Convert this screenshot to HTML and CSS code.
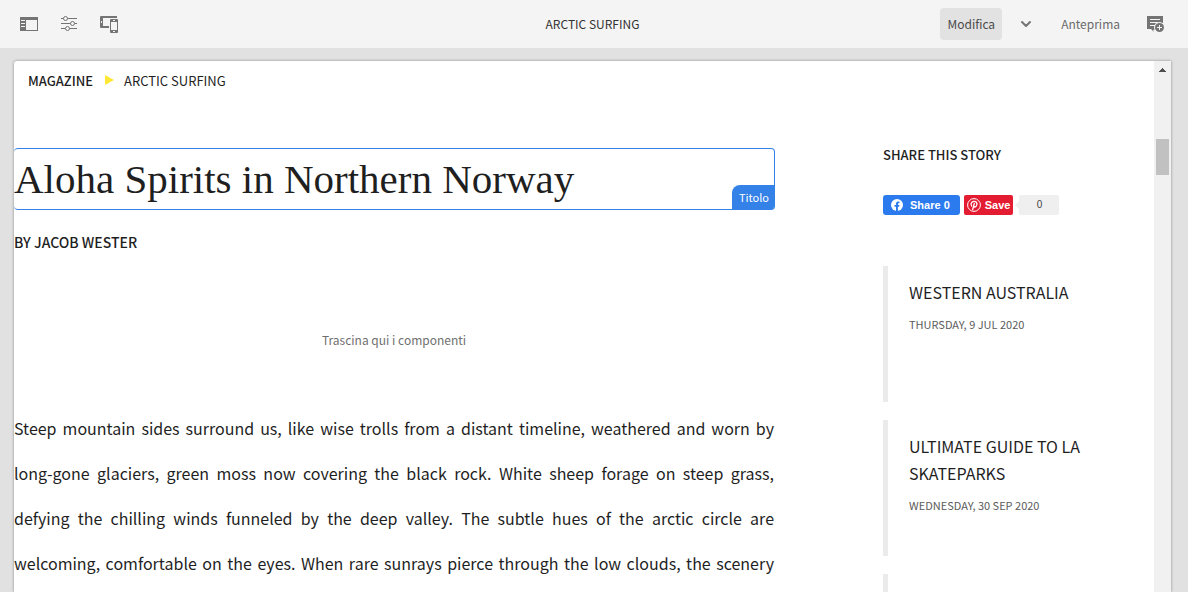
FILE: index.html
```html
<!DOCTYPE html>
<html lang="it">
<head>
<meta charset="utf-8">
<meta name="viewport" content="width=device-width, initial-scale=1">
<title>Arctic Surfing</title>
<link rel="stylesheet" href="styles.css">
</head>
<body>
<header class="toolbar">
  <div class="tools">
    <button class="tool" type="button" aria-label="Pannello laterale">
      <svg width="18" height="18" viewBox="0 0 18 18"><path fill="#747474" fill-rule="evenodd" d="M0 2h18v14H0zM6 5v10h11V5zM1 5h4v1H1zM1 8h4v1H1zM1 11h4v1H1z"/></svg>
    </button>
    <button class="tool" type="button" aria-label="Informazioni pagina">
      <svg width="18" height="18" viewBox="0 0 18 18" fill="none" stroke="#747474"><path d="M1 3.500h2.500M7.500 3.500H17M1 8.500h9.500M14.500 8.500H17M1 13.500h4.500M9.500 13.500H17"/><circle cx="5.500" cy="3.500" r="2"/><circle cx="12.500" cy="8.500" r="2"/><circle cx="7.500" cy="13.500" r="2"/></svg>
    </button>
    <button class="tool" type="button" aria-label="Emulatore">
      <svg width="18" height="18" viewBox="0 0 18 18" fill="#747474"><path fill-rule="evenodd" d="M1 1h16v2H3v8h6v2H1Q0 13 0 12V2Q0 1 1 1zM1 6v2h1V6z"/><path fill-rule="evenodd" d="M11 4h6q1 0 1 1v12q0 1-1 1h-6q-1 0-1-1V5q0-1 1-1zM11 7v8h6V7zM13 5v1h2V5zM13 16v1h2v-1z"/></svg>
    </button>
  </div>
  <h1 class="page-name">ARCTIC SURFING</h1>
  <div class="actions">
    <button class="mode mode-active" type="button">Modifica</button>
    <button class="chevron" type="button" aria-label="Modalità">
      <svg width="12" height="8" viewBox="0 0 12 8"><path fill="none" stroke="#747474" stroke-width="2" stroke-linecap="round" stroke-linejoin="round" d="M2 2l4 4 4-4"/></svg>
    </button>
    <button class="mode" type="button">Anteprima</button>
    <button class="tool" type="button" aria-label="Aggiungi annotazione">
      <svg width="18" height="18" viewBox="0 0 18 18"><path fill="#747474" d="M0 1h16v14H6l1 2L4 14H0z"/><path stroke="#f4f4f4" d="M3 4.500h10M3 7.500h8M3 10.500h5"/><circle cx="12.500" cy="12.500" r="5.500" fill="#f4f4f4"/><circle cx="12.500" cy="12.500" r="4.500" fill="#747474"/><path stroke="#f4f4f4" d="M12.500 10v5M10 12.500h5"/></svg>
    </button>
  </div>
</header>
<div class="stage">
  <div class="frame">
    <main class="content">
      <nav class="breadcrumb" aria-label="Percorso">
        <a class="crumb crumb-root" href="#">MAGAZINE</a>
        <svg width="9" height="10" viewBox="0 0 9 10"><path fill="#ffe936" d="M0 0l9 5-9 5z"/></svg>
        <span class="crumb">ARCTIC SURFING</span>
      </nav>
      <div class="columns">
        <article class="article">
          <div class="selected">
            <h2 class="headline">Aloha Spirits in Northern Norway</h2>
            <span class="tag">Titolo</span>
          </div>
          <p class="byline">BY JACOB WESTER</p>
          <div class="dropzone">Trascina qui i componenti</div>
          <p class="story">Steep mountain sides surround us, like wise trolls from a distant timeline, weathered and worn by long-gone glaciers, green moss now covering the black rock. White sheep forage on steep grass, defying the chilling winds funneled by the deep valley. The subtle hues of the arctic circle are welcoming, comfortable on the eyes. When rare sunrays pierce through the low clouds, the scenery</p>
        </article>
        <aside class="sidebar">
          <h3 class="share-title">SHARE THIS STORY</h3>
          <div class="share">
            <button class="share-button facebook" type="button">
              <svg width="12" height="12" viewBox="0 0 12 12"><circle cx="6" cy="6" r="6" fill="#fff"/><path fill="#2b7bef" d="M5 12V7.800H3.500V6H5V4.700Q5 2.500 7.100 2.500l1.300.1v1.600h-.8Q6.900 4.200 6.900 5v1h1.500L8.100 7.800H6.900V12z"/></svg>
              Share 0
            </button>
            <button class="share-button pinterest" type="button">
              <svg width="14" height="14" viewBox="0 0 14 14" fill="none" stroke="#fff"><circle cx="7" cy="7" r="6.400"/><path stroke-width="1.300" stroke-linecap="round" d="M4.600 8Q3.300 6 4.700 4.400 6.200 3 8.300 3.600q2 .8 1.600 3Q9.300 8.900 7.800 9 6.700 9 6.500 8M7.300 5.300L5.700 11.500"/></svg>
              Save
            </button>
            <span class="count">0</span>
          </div>
          <div class="cards">
            <section class="card">
              <h4 class="card-title">WESTERN AUSTRALIA</h4>
              <p class="card-date">THURSDAY, 9 JUL 2020</p>
            </section>
            <section class="card">
              <h4 class="card-title">ULTIMATE GUIDE TO LA SKATEPARKS</h4>
              <p class="card-date">WEDNESDAY, 30 SEP 2020</p>
            </section>
            <section class="card"></section>
          </div>
        </aside>
      </div>
    </main>
    <div class="scrollbar">
      <svg class="scroll-up" width="7" height="4" viewBox="0 0 7 4"><path fill="#505050" d="M3 0h1v1h1v1h1v1h1v1H0V3h1V2h1V1h1z"/></svg>
      <div class="thumb"></div>
    </div>
  </div>
</div>
</body>
</html>
```
FILE: styles.css
```css
* { box-sizing: border-box; }

body {
  margin: 0;
  height: 100vh;
  display: flex;
  flex-direction: column;
  overflow: hidden;
  background: #e1e1e1;
  color: #1f1f1f;
  font-family: "Noto Sans CJK JP", "Noto Sans", sans-serif;
}

h1, h2, h3, h4, p { margin: 0; font-weight: 400; }

button {
  border: 0;
  padding: 0;
  background: none;
  font-family: inherit;
  cursor: pointer;
}

svg { display: block; flex: none; }

.toolbar {
  flex: none;
  height: 48px;
  display: grid;
  grid-template-columns: 1fr auto 1fr;
  align-items: center;
  padding: 0 23px 0 20px;
  background: #f4f4f4;
}

.tools { display: flex; gap: 22px; }

.page-name { font-size: 12px; line-height: 20px; color: #323232; }

.actions { display: flex; align-items: center; justify-content: flex-end; }

.mode {
  height: 32px;
  padding: 0 7px;
  border-radius: 4px;
  font-size: 12px;
  line-height: 32px;
  color: #6b6b6b;
}

.mode-active { background: #e2e2e2; color: #4b4b4b; }

.chevron { padding: 12px 22px 12px 18px; }

.actions .tool { margin-left: 20px; }

.stage {
  flex: 1;
  min-height: 0;
  display: flex;
  padding: 13px 17px 0 14px;
}

.frame {
  flex: 1;
  display: flex;
  background: #fff;
  border-radius: 3px 0 0 0;
  box-shadow: 0 0 3px rgba(0, 0, 0, .4);
}

.content { flex: 1; min-width: 0; overflow: hidden; }

.breadcrumb {
  display: flex;
  align-items: center;
  gap: 12px;
  height: 38px;
  padding: 0 14px;
}

.crumb { font-size: 13px; color: #1f1f1f; text-decoration: none; }
.crumb + svg { margin-right: -2px; }
.crumb-root { font-weight: 500; }

.columns {
  display: grid;
  grid-template-columns: 8fr 1fr 3fr;
  padding-top: 49px;
}

.selected {
  position: relative;
  height: 62px;
  margin-right: -1px;
  border: 1px solid #3482e7;
  border-left-width: 0;
  border-radius: 4px;
}

.headline {
  font-family: "Liberation Serif", serif;
  font-size: 41px;
  line-height: 60px;
  white-space: nowrap;
}

.tag {
  position: absolute;
  right: 0;
  bottom: 0;
  padding: 0 5px 0 7px;
  border-radius: 8px 0 2px 0;
  background: #3482e7;
  color: #fff;
  font-size: 11px;
  line-height: 24px;
}

.byline { padding-top: 21px; font-size: 14px; line-height: 22px; font-weight: 500; }

.dropzone {
  padding: 65px 0 44px;
  text-align: center;
  font-size: 12px;
  line-height: 44px;
  color: #6f6f6f;
}

.story { font-size: 16px; line-height: 45px; text-align: justify; text-align-last: justify; }

.sidebar { grid-column: 3; padding-left: 14px; }

.share-title { font-size: 13px; line-height: 14px; font-weight: 500; }

.share {
  display: flex;
  align-items: center;
  gap: 4px;
  padding-top: 33px;
}

.share-button {
  display: flex;
  align-items: center;
  height: 20px;
  border-radius: 3px;
  color: #fff;
  font: bold 11px/20px "Liberation Sans", sans-serif;
}

.facebook { gap: 7px; padding: 0 10px 0 8px; background: #2b7bef; }
.pinterest { gap: 4px; padding: 0 3px; border-radius: 2px; background: #e41c32; }

.count {
  position: relative;
  width: 40px;
  margin-left: 2px;
  border-radius: 2px;
  background: #efefef;
  color: #444;
  text-align: center;
  font: 10px/20px "Liberation Sans", sans-serif;
}

.count::before {
  content: "";
  position: absolute;
  left: -4px;
  top: 6px;
  border: 4px solid transparent;
  border-left: 0;
  border-right-color: #efefef;
}

.cards { display: grid; gap: 18px; padding-top: 51px; }

.card {
  min-height: 136px;
  border-left: 5px solid #ebebeb;
  padding: 13px 14px 0 21px;
}

.card-title { font-size: 16px; line-height: 27px; }
.card-date { padding-top: 8px; font-size: 11px; line-height: 20px; color: #5b5b5b; }

.scrollbar {
  flex: none;
  width: 17px;
  display: flex;
  flex-direction: column;
  align-items: center;
  gap: 67px;
  padding-top: 7px;
  background: #f1f1f1;
}

.thumb { width: 13px; height: 36px; background: #c1c1c1; }
```
